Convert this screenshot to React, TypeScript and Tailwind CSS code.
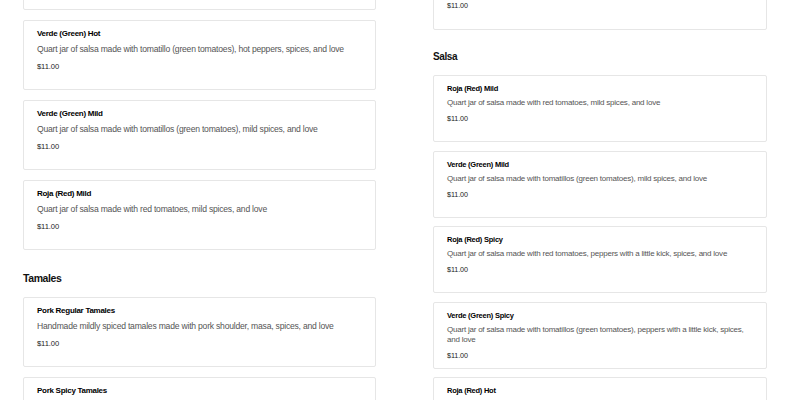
type Item = { name: string; desc: string; price: string }

const leftTop: Item[] = [
  { name: 'Verde (Green) Hot', desc: 'Quart jar of salsa made with tomatillo (green tomatoes), hot peppers, spices, and love', price: '$11.00' },
  { name: 'Verde (Green) Mild', desc: 'Quart jar of salsa made with tomatillos (green tomatoes), mild spices, and love', price: '$11.00' },
  { name: 'Roja (Red) Mild', desc: 'Quart jar of salsa made with red tomatoes, mild spices, and love', price: '$11.00' },
]

const tamales: Item[] = [
  { name: 'Pork Regular Tamales', desc: 'Handmade mildly spiced tamales made with pork shoulder, masa, spices, and love', price: '$11.00' },
  { name: 'Pork Spicy Tamales', desc: 'Handmade spicy tamales made with pork shoulder, masa, spices, and love', price: '$11.00' },
]

const salsa: Item[] = [
  { name: 'Roja (Red) Mild', desc: 'Quart jar of salsa made with red tomatoes, mild spices, and love', price: '$11.00' },
  { name: 'Verde (Green) Mild', desc: 'Quart jar of salsa made with tomatillos (green tomatoes), mild spices, and love', price: '$11.00' },
  { name: 'Roja (Red) Spicy', desc: 'Quart jar of salsa made with red tomatoes, peppers with a little kick, spices, and love', price: '$11.00' },
  { name: 'Verde (Green) Spicy', desc: 'Quart jar of salsa made with tomatillos (green tomatoes), peppers with a little kick, spices, and love', price: '$11.00' },
  { name: 'Roja (Red) Hot', desc: 'Quart jar of salsa made with red tomatoes, hot peppers, spices, and love', price: '$11.00' },
]

function LeftCard({ item }: { item: Item }) {
  return (
    <div className="h-[70px] shrink-0 rounded-[2px] border border-[#e6e6e6] bg-white pl-[13px] pr-[10px] pt-[8px]">
      <div className="text-[8px] font-bold leading-[10px] tracking-[-0.28px] text-black">{item.name}</div>
      <div className="mt-[5px] text-[8.6px] leading-[11px] tracking-[-0.22px] text-[#555]">{item.desc}</div>
      <div className="mt-[6px] text-[7.6px] leading-[11px] tracking-[-0.1px] text-[#222]">{item.price}</div>
    </div>
  )
}

function RightCard({ item }: { item: Item }) {
  return (
    <div className="h-[67px] shrink-0 rounded-[2px] border border-[#e6e6e6] bg-white pl-[13px] pr-[10px] pt-[8px]">
      <div className="text-[7.5px] font-bold leading-[10px] tracking-[-0.24px] text-black">{item.name}</div>
      <div className="mt-[4px] text-[8px] leading-[10px] tracking-[-0.22px] text-[#555]">{item.desc}</div>
      <div className="mt-[6px] text-[7.2px] leading-[10px] tracking-[-0.1px] text-[#222]">{item.price}</div>
    </div>
  )
}

export default function App() {
  return (
    <div
      className="h-[400px] w-[800px] overflow-hidden bg-white"
      style={{ fontFamily: '"Liberation Sans", Arial, sans-serif' }}
    >
      <div className="flex gap-[57px] pl-[23px]">
        {/* left column */}
        <div className="-mt-[60px] flex w-[353px] flex-col">
          <div className="flex flex-col gap-[10px]">
            <div className="h-[70px] shrink-0 rounded-[2px] border border-[#e6e6e6] bg-white" />
            {leftTop.map((it, i) => (
              <LeftCard key={i} item={it} />
            ))}
          </div>
          <h2 className="mt-[20px] mb-[11px] text-[10.5px] font-bold leading-[16px] tracking-[-0.4px] text-[#111]">Tamales</h2>
          <div className="flex flex-col gap-[9.5px]">
            {tamales.map((it, i) => (
              <LeftCard key={i} item={it} />
            ))}
          </div>
        </div>

        {/* right column */}
        <div className="-mt-[37px] flex w-[334px] flex-col">
          <div className="h-[67px] shrink-0 rounded-[2px] border border-[#e6e6e6] bg-white pl-[13px] pt-[37px]">
            <div className="text-[7.2px] leading-[10px] tracking-[-0.1px] text-[#222]">$11.00</div>
          </div>
          <h2 className="mt-[19px] mb-[10px] text-[10px] font-bold leading-[16px] tracking-[-0.4px] text-[#111]">Salsa</h2>
          <div className="flex flex-col gap-[8.5px]">
            {salsa.map((it, i) => (
              <RightCard key={i} item={it} />
            ))}
          </div>
        </div>
      </div>
    </div>
  )
}
